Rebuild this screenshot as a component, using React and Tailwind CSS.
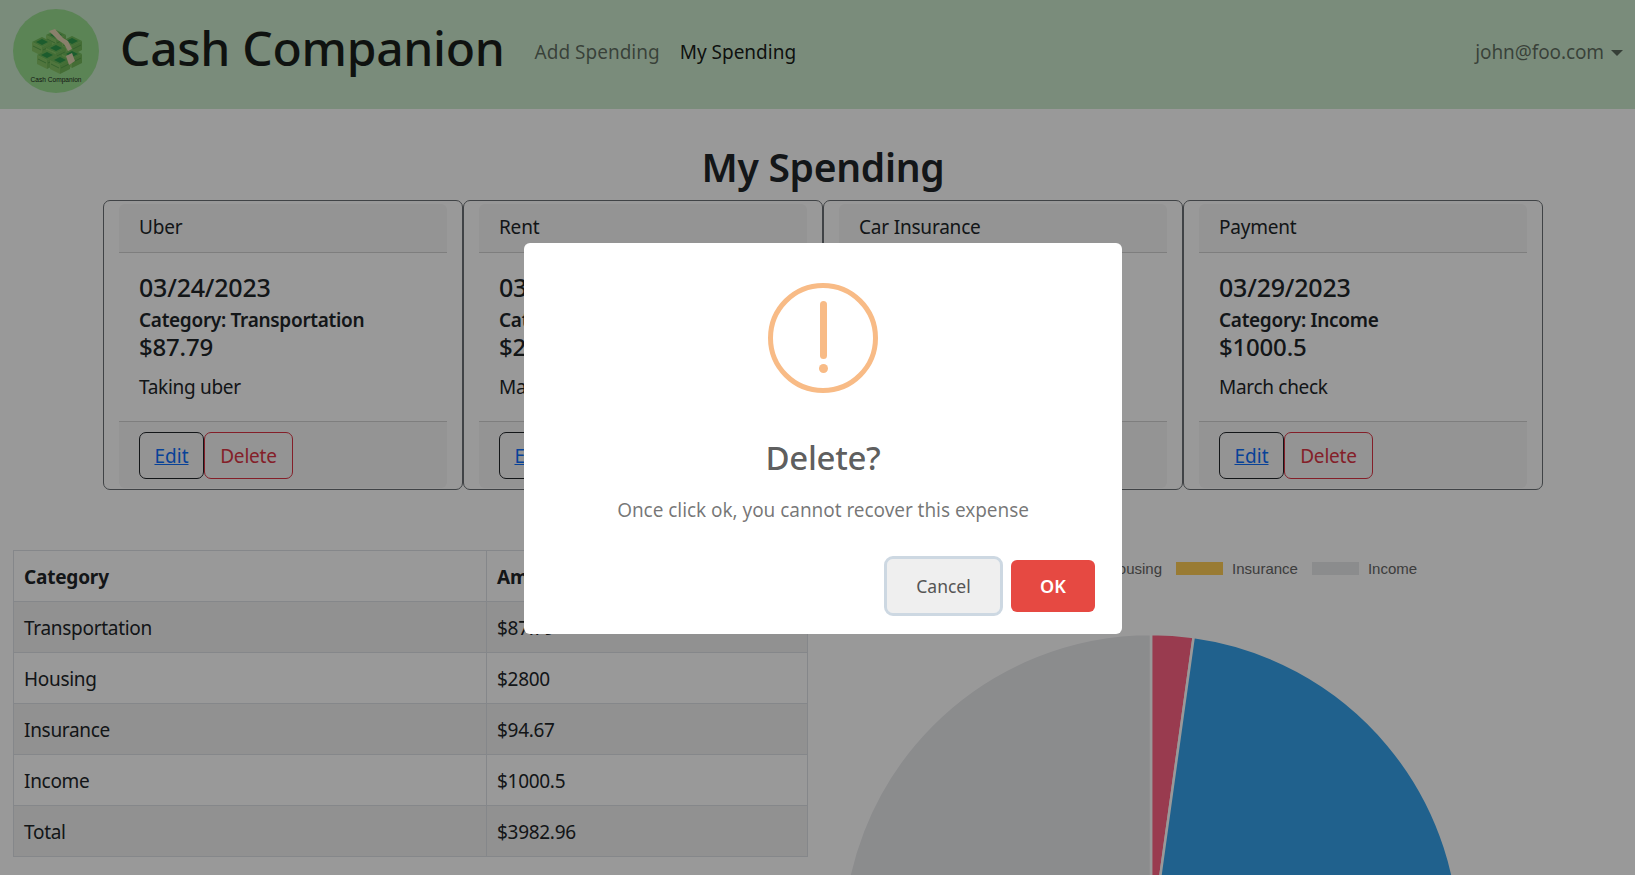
import React from "react";

const sans = "font-['Noto_Sans','Open_Sans',sans-serif]";

const cards = [
    { title: "Uber", date: "03/24/2023", category: "Transportation", amount: "$87.79", note: "Taking uber" },
    { title: "Rent", date: "03/25/2023", category: "Housing", amount: "$2800", note: "March rent" },
    { title: "Car Insurance", date: "03/27/2023", category: "Insurance", amount: "$94.67", note: "Car payment" },
    { title: "Payment", date: "03/29/2023", category: "Income", amount: "$1000.5", note: "March check" },
];

const rows = [
    ["Transportation", "$87.79"],
    ["Housing", "$2800"],
    ["Insurance", "$94.67"],
    ["Income", "$1000.5"],
    ["Total", "$3982.96"],
];

const legend = [
    ["Transportation", "bg-[#ff6384]"],
    ["Housing", "bg-[#36a2eb]"],
    ["Insurance", "bg-[#ffcd56]"],
    ["Income", "bg-[#e8e9ec]"],
];

const slices = [
    { value: 87.79, color: "#ff6384" },
    { value: 2800, color: "#36a2eb" },
    { value: 94.67, color: "#ffcd56" },
    { value: 1000.5, color: "#e8e9ec" },
];

const Bundle = ({ x, y }) => (
    <g transform={`translate(${x} ${y})`}>
        <polygon points="0,5 10,0 20,5 10,10" fill="#6fb85a" />
        <polygon points="4,5 10,2 16,5 10,8" fill="#2f9a4c" />
        <polygon points="0,5 10,10 10,19 0,14" fill="#86c466" />
        <polygon points="20,5 10,10 10,19 20,14" fill="#72b659" />
        <line x1="1" y1="9" x2="9" y2="13" stroke="#4f9a48" strokeWidth="0.8" />
        <line x1="11" y1="13" x2="19" y2="9" stroke="#4f9a48" strokeWidth="0.8" />
    </g>
);

const Logo = () => (
    <svg width="86" height="84" viewBox="0 0 86 84" className="shrink-0 mb-[8px]">
        <ellipse cx="43" cy="42" rx="43" ry="42" fill="#98dc8e" />
        <Bundle x="33" y="21" />
        <Bundle x="49" y="27" />
        <Bundle x="19" y="28" />
        <Bundle x="33" y="34" />
        <Bundle x="49" y="40" />
        <Bundle x="24" y="41" />
        <Bundle x="37" y="46" />
        <polygon points="36,22 42,20 50,29 55,32 59,40 55,42 51,35 45,31" fill="#e6d5b4" />
        <polygon points="53,47 59,44 62,52 56,56" fill="#e6d5b4" />
        <text x="43" y="72.5" textAnchor="middle" fontSize="6.6" fill="#1c2b1c" fontFamily="Liberation Sans, sans-serif">
            Cash Companion
        </text>
    </svg>
);

const Pie = () => {
    let start = 0;
    const total = slices.reduce((sum, s) => sum + s.value, 0);
    return (
        <svg width="620" height="620" viewBox="0 0 620 620" className="mx-auto mt-[56px] shrink-0">
            {slices.map((s) => {
                const a0 = (start / total) * Math.PI * 2;
                start += s.value;
                const a1 = (start / total) * Math.PI * 2;
                const large = a1 - a0 > Math.PI ? 1 : 0;
                const d = `M310 310 L${310 + 309 * Math.sin(a0)} ${310 - 309 * Math.cos(a0)} A309 309 0 ${large} 1 ${310 + 309 * Math.sin(a1)} ${310 - 309 * Math.cos(a1)} Z`;
                return <path key={s.color} d={d} fill={s.color} stroke="#ffffff" strokeWidth="2.5" />;
            })}
        </svg>
    );
};

const SpendCard = ({ card }) => (
    <div className="h-[290px] rounded-[7px] border border-[#6b7075] px-[15px] pt-[3px] pb-[1px] flex flex-col">
        <div className="h-[49px] shrink-0 bg-[#f7f7f7] border-b border-[#d2d2d2] px-[20px] pb-[2px] flex items-center text-[19px] tracking-[-0.2px] rounded-t-[6px]">
            {card.title}
        </div>
        <div className="flex-1 px-[20px] pt-[17px]">
            <p className="text-[25px] leading-[34px] font-medium tracking-[-0.2px]">{card.date}</p>
            <p className="text-[19px] leading-[32px] font-semibold tracking-[-0.3px]">Category: {card.category}</p>
            <p className="text-[24px] leading-[22px] font-medium tracking-[-0.2px]">{card.amount}</p>
            <p className="text-[19px] leading-[30px] mt-[14px] tracking-[-0.3px]">{card.note}</p>
        </div>
        <div className="h-[67px] shrink-0 bg-[#f7f7f7] border-t border-[#d2d2d2] px-[20px] pt-[10px] flex items-start text-[19px] rounded-b-[6px]">
            <a className="h-[47px] w-[65px] pt-[2px] rounded-[7px] border border-[#212529] flex items-center justify-center text-[#0d6efd] underline">
                Edit
            </a>
            <button className="h-[47px] w-[89px] pt-[2px] rounded-[7px] border border-[#dc3545] text-[#dc3545] tracking-[-0.2px]">
                Delete
            </button>
        </div>
    </div>
);

const Modal = () => (
    <div className={`fixed inset-0 bg-black/40 flex justify-center items-start pt-[243px] pl-[11px] ${sans}`}>
        <div className="w-[598px] h-[391px] bg-white rounded-[6px] flex flex-col items-center pt-[40px] relative">
            <div className="w-[110px] h-[110px] rounded-full border-[5px] border-[#f8bb86] flex flex-col items-center shrink-0">
                <div className="w-[7px] h-[58px] mt-[13px] rounded-full bg-[#f8bb86]" />
                <div className="w-[9px] h-[9px] mt-[5px] rounded-full bg-[#f8bb86]" />
            </div>
            <h2 className="mt-[41px] text-[33px] leading-[48px] font-medium text-black/65 tracking-[-0.3px]">Delete?</h2>
            <p className="mt-[13px] text-[19px] leading-[30px] text-black/55 tracking-[-0.05px]">
                Once click ok, you cannot recover this expense
            </p>
            <div className="absolute right-[27px] bottom-[21px] flex items-center gap-[9px]">
                <button className="w-[113px] h-[54px] rounded-[6px] bg-[#efefef] text-[#555555] text-[17.5px] outline-[3px] outline-[#cdd8e2] outline-offset-0 mr-[2px] ml-[3px]">
                    Cancel
                </button>
                <button className="w-[84px] h-[52px] rounded-[6px] bg-[#e64942] text-white text-[18px] font-semibold">
                    OK
                </button>
            </div>
        </div>
    </div>
);

export default function App() {
    return (
        <div className={`h-screen overflow-hidden bg-white text-[#212529] ${sans}`}>
            <header className="h-[109px] bg-[#cbe9cd] flex items-center pl-[13px] pr-[12px]">
                <Logo />
                <h1 className="ml-[21px] text-[48px] font-medium text-[#1a1f1c] tracking-[-0.3px] leading-none pb-[14px]">Cash Companion</h1>
                <nav className="ml-[30px] flex gap-[20px] text-[19px] pb-[4px]">
                    <a className="text-black/55">Add Spending</a>
                    <a className="text-black/90">My Spending</a>
                </nav>
                <div className="ml-auto flex items-center gap-[7px] text-[19px] text-black/55 tracking-[-0.1px] pb-[4px]">
                    john@foo.com
                    <span className="w-0 h-0 border-x-[6px] border-x-transparent border-t-[6px] border-t-black/55" />
                </div>
            </header>

            <h2 className="text-center text-[39px] leading-[50px] font-semibold mt-[33px] pl-[11px] tracking-[-0.3px]">My Spending</h2>

            <section className="grid grid-cols-4 mx-[103px] w-[1440px] mt-[8px]">
                {cards.map((card) => (
                    <SpendCard key={card.title} card={card} />
                ))}
            </section>

            <section className="flex items-start pl-[13px] mt-[60px]">
                <table className="w-[795px] shrink-0 border-collapse text-[19px] tracking-[-0.3px] table-fixed">
                    <thead>
                        <tr className="h-[51px]">
                            <th className="w-[473px] border border-[#dee2e6] px-[10px] pt-[2px] text-left font-bold tracking-[-0.2px]">Category</th>
                            <th className="border border-[#dee2e6] px-[10px] pt-[2px] text-left font-bold tracking-[-0.2px]">Amount</th>
                        </tr>
                    </thead>
                    <tbody>
                        {rows.map(([name, amount], i) => (
                            <tr key={name} className={i % 2 === 0 ? "h-[51px] bg-[#f2f2f2]" : "h-[51px]"}>
                                <td className="border border-[#dee2e6] px-[10px] pt-[2px]">{name}</td>
                                <td className="border border-[#dee2e6] px-[10px] pt-[2px]">{amount}</td>
                            </tr>
                        ))}
                    </tbody>
                </table>

                <div className="ml-[15px] w-[656px] shrink-0 pt-[10px] flex flex-col">
                    <div className="flex justify-center gap-[14px] h-[17px] text-[15px] leading-[17px] text-[#666666] font-['Liberation_Sans',sans-serif] whitespace-nowrap">
                        {legend.map(([label, color]) => (
                            <div key={label} className="flex items-center gap-[9px]">
                                <span className={`w-[47px] h-[13px] ${color}`} />
                                {label}
                            </div>
                        ))}
                    </div>
                    <Pie />
                </div>
            </section>

            <Modal />
        </div>
    );
}
